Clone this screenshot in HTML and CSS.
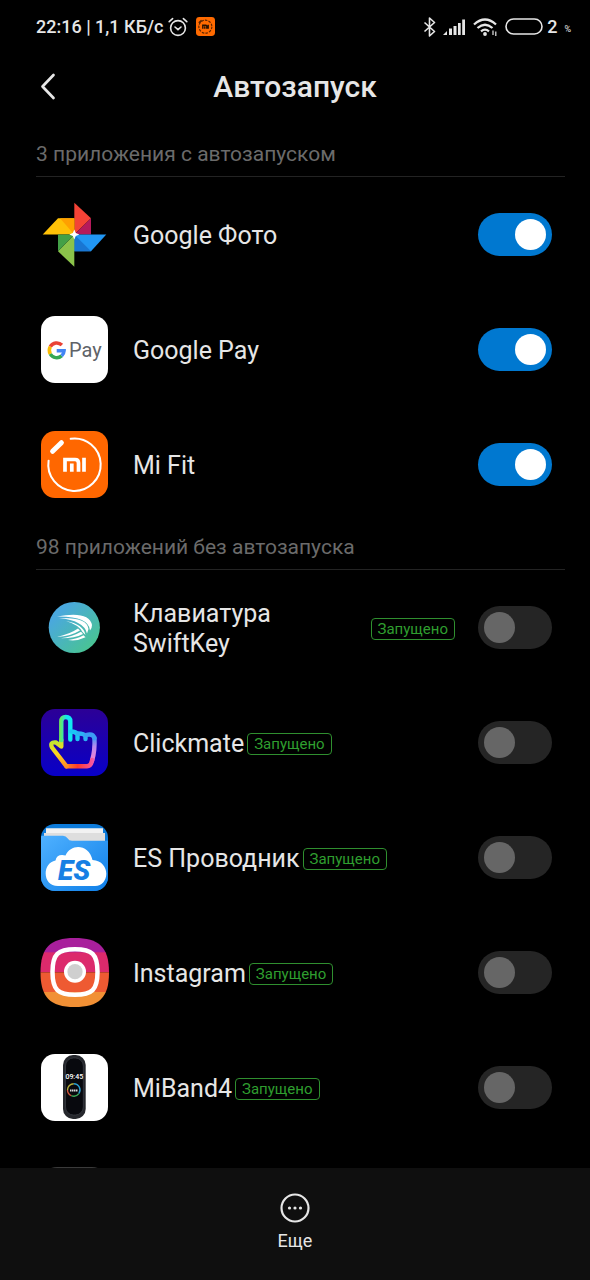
FILE: index.html
```html
<!DOCTYPE html>
<html lang="ru">
<head>
    <meta charset="UTF-8">
    <meta name="viewport" content="width=device-width, initial-scale=1.0">
    <title>Автозапуск</title>
    <link rel="stylesheet" href="styles.css">
</head>
<body>
    <div class="status-bar">
        <span class="status-text">22:16 | 1,1 КБ/с</span>
        <svg class="alarm" width="20" height="20" viewBox="0 0 20 20" fill="none" stroke="#e6e6e6" stroke-width="1.6" stroke-linecap="round">
            <circle cx="10" cy="11" r="7.4"/>
            <path d="M7 10l3 2.6 3-2.6M1.2 4.6L4.6 1.6M18.8 4.6L15.4 1.6"/>
        </svg>
        <svg class="mi-small" width="19" height="19" viewBox="0 0 67 67">
            <rect width="67" height="67" rx="12" fill="#ff6a00"/>
            <circle cx="33" cy="34" r="23" fill="none" stroke="#5a2500" stroke-width="4" stroke-dasharray="9 4"/>
            <path d="M10 21L20 12" stroke="#5a2500" stroke-width="6"/>
            <path d="M24 41V29h11q3 0 3 3v9M31 33v8M43 27v14" fill="none" stroke="#2b1200" stroke-width="5"/>
        </svg>
        <div class="status-right">
            <svg width="13" height="20" viewBox="0 0 13 20" fill="none" stroke="#e6e6e6" stroke-width="1.6" stroke-linejoin="round">
                <path d="M1.5 5.5l10 9-5 4.5V1l5 4.5-10 9"/>
            </svg>
            <svg class="signal" width="24" height="18" viewBox="0 0 24 18" fill="#e6e6e6">
                <path d="M1 17l4-4v4zM7 10.5h3V17H7zM11.5 8h3v9h-3zM16 5h2.7v12H16zM20.2 1.5H23V17h-2.8z"/>
            </svg>
            <svg class="wifi" width="25" height="20" viewBox="0 0 25 20" fill="none" stroke="#e6e6e6" stroke-width="2.3">
                <path d="M1 7.5q11-10 22 0M4.5 11q7.5-6.5 15 0M8 14.3q4-3.3 8 0"/>
                <circle cx="12" cy="17" r="1.9" fill="#e6e6e6" stroke="none"/>
                <path d="M20 13.5V18M22.8 14.5V19" stroke-width="1.2"/>
            </svg>
            <svg class="battery" width="38" height="18" viewBox="0 0 38 18">
                <rect x="1" y="1" width="36" height="15" rx="7.5" fill="none" stroke="#e6e6e6" stroke-width="1.6"/>
            </svg>
            <span class="status-text">2</span>
            <span class="percent">%</span>
        </div>
    </div>

    <header class="header">
        <button class="back" type="button" aria-label="Назад">
            <svg width="18" height="28" viewBox="0 0 18 28" fill="none" stroke="#e6e6e6" stroke-width="2.7" stroke-linecap="round" stroke-linejoin="round">
                <path d="M14.5 2L3.5 13.5 14.5 25"/>
            </svg>
        </button>
        <h1>Автозапуск</h1>
    </header>

    <main class="content">
        <h2 class="section-title">3 приложения с автозапуском</h2>
        <ul class="apps">
            <li class="app">
                <svg class="icon" viewBox="0 0 67 67">
                    <path d="M33.3 1.7L50 17.3 33.3 33.5z" fill="#f44336"/>
                    <path d="M50 17.3v16.2H33.3z" fill="#b51a5c"/>
                    <path d="M1.7 33.5L17 17.3h16.3v16.2z" fill="#ffc107"/>
                    <path d="M19 17.3h14.3v16.2z" fill="#ffa000"/>
                    <path d="M33.3 33.5h32L50 50.3H33.3z" fill="#2196f3"/>
                    <path d="M33.3 33.5L50 50.3H33.3z" fill="#1976d2"/>
                    <path d="M33.3 33.5v32.2L17 50.3z" fill="#8bc34a"/>
                    <path d="M17 33.5h16.3L17 50.3z" fill="#43a047"/>
                    <path d="M33.3 28.5l1.5 3.5 3.5 1.5-3.5 1.5-1.5 3.5-1.5-3.5-3.5-1.5 3.5-1.5z" fill="#fff"/>
                </svg>
                <div class="info"><label class="name" for="photos">Google Фото</label></div>
                <input class="toggle" type="checkbox" id="photos" checked>
            </li>
            <li class="app">
                <svg class="icon" viewBox="0 0 67 67">
                    <rect width="67" height="67" rx="14" fill="#fff"/>
                    <g fill="none" stroke-width="3.5">
                        <path d="M9.3 30.7A7.4 7.4 0 0 1 20.9 29.1" stroke="#ea4335"/>
                        <path d="M9.3 38A7.4 7.4 0 0 1 9.3 30.7" stroke="#fbbc04"/>
                        <path d="M9.3 38A7.4 7.4 0 0 0 20.6 39.9" stroke="#34a853"/>
                        <path d="M15.7 34.7h7.4A7.4 7.4 0 0 1 20.6 39.9" stroke="#4285f4"/>
                    </g>
                    <text class="pay-text" x="28" y="41">Pay</text>
                </svg>
                <div class="info"><label class="name" for="pay">Google Pay</label></div>
                <input class="toggle" type="checkbox" id="pay" checked>
            </li>
            <li class="app">
                <svg class="icon" viewBox="0 0 67 67">
                    <rect width="67" height="67" rx="14" fill="#ff6700"/>
                    <path d="M29.7 7.8A26.2 26.2 0 1 1 7.6 29.7" fill="none" stroke="#fff" stroke-width="2" stroke-linecap="round"/>
                    <path d="M11.6 20.3l8.8-8.6" stroke="#fff" stroke-width="5" stroke-linecap="round"/>
                    <path d="M24 40.7V28.5h10q3.5 0 3.5 3.5v8.7M30.8 32.5v8.2M43 26.8v13.9" fill="none" stroke="#fff" stroke-width="3.7"/>
                </svg>
                <div class="info"><label class="name" for="mifit">Mi Fit</label></div>
                <input class="toggle" type="checkbox" id="mifit" checked>
            </li>
        </ul>

        <h2 class="section-title">98 приложений без автозапуска</h2>
        <ul class="apps">
            <li class="app">
                <svg class="icon" viewBox="0 0 67 67">
                    <defs>
                        <linearGradient id="swift" x1="0" y1="0" x2="1" y2="1">
                            <stop offset="0.2" stop-color="#4aa8de"/>
                            <stop offset="0.9" stop-color="#49c58f"/>
                        </linearGradient>
                    </defs>
                    <circle cx="33.3" cy="33.5" r="25.6" fill="url(#swift)"/>
                    <g fill="#fff">
                        <path d="M16 22.5Q48 16.5 51 31Q51 34.500 49 36.500Q48 22 16 22.500z"/>
                        <path d="M18 24Q46.500 23 47.500 35L46 39.500Q43 26.500 18 24z"/>
                        <path d="M25 27Q42.500 30 44.500 41L41.500 38Q38 31 25 27z"/>
                        <path d="M16 43Q29 40 37 34.500L39 36.500Q30 42 16 43z"/>
                        <path d="M20 44.300Q32 42.500 40 37.800L42 40Q33 44.500 20 44.300z"/>
                        <path d="M27 46Q36 45 42.500 41.300L44.500 43.300Q36 47.500 27 46z"/>
                    </g>
                </svg>
                <div class="info">
                    <label class="name" for="swiftkey">Клавиатура SwiftKey</label>
                    <span class="badge">Запущено</span>
                </div>
                <input class="toggle" type="checkbox" id="swiftkey">
            </li>
            <li class="app">
                <svg class="icon" viewBox="0 0 67 67">
                    <defs>
                        <linearGradient id="night" x1="0" y1="0" x2="0" y2="1">
                            <stop offset="0" stop-color="#2c0096"/>
                            <stop offset="1" stop-color="#0800c8"/>
                        </linearGradient>
                        <linearGradient id="finger" gradientUnits="userSpaceOnUse" x1="19" y1="0" x2="30" y2="0">
                            <stop offset="0" stop-color="#6be85c"/>
                            <stop offset="0.6" stop-color="#12e8f2"/>
                        </linearGradient>
                        <linearGradient id="thumb" gradientUnits="userSpaceOnUse" x1="20" y1="30" x2="24" y2="58">
                            <stop offset="0" stop-color="#b9e833"/>
                            <stop offset="0.5" stop-color="#ffd51f"/>
                            <stop offset="1" stop-color="#ff8a24"/>
                        </linearGradient>
                        <linearGradient id="palm" gradientUnits="userSpaceOnUse" x1="25" y1="0" x2="54" y2="0">
                            <stop offset="0" stop-color="#ff8a24"/>
                            <stop offset="0.4" stop-color="#ff3a2c"/>
                            <stop offset="1" stop-color="#f45bb4"/>
                        </linearGradient>
                        <linearGradient id="side" gradientUnits="userSpaceOnUse" x1="0" y1="28" x2="0" y2="52">
                            <stop offset="0" stop-color="#3c9bf5"/>
                            <stop offset="0.4" stop-color="#b98af0"/>
                            <stop offset="1" stop-color="#f77fce"/>
                        </linearGradient>
                    </defs>
                    <rect width="67" height="67" rx="14" fill="url(#night)"/>
                    <g fill="none" stroke-width="4.4" stroke-linecap="round" stroke-linejoin="round">
                        <path d="M53.5 29Q54 42 51.2 51" stroke="url(#side)"/>
                        <path d="M25.5 57.3H46Q50 57.3 51.2 51" stroke="url(#palm)"/>
                        <path d="M20.3 31v6.5L15 33.5Q8.500 32.500 11 38.500L25.500 57.300" stroke="url(#thumb)"/>
                        <path d="M20.3 31V12.500q0-4.500 4.500-4.500T29.300 12.500v18" stroke="url(#finger)"/>
                        <path d="M30 22.500q5 0 6.500 3v4.500" stroke="#1cc5f5"/>
                        <path d="M37 24.500q6 0 7.500 2.500v3" stroke="#2bb0f5"/>
                        <path d="M45 26q7-2 8.500 3" stroke="#3c9bf5"/>
                    </g>
                </svg>
                <div class="info">
                    <label class="name" for="clickmate">Clickmate</label>
                    <span class="badge">Запущено</span>
                </div>
                <input class="toggle" type="checkbox" id="clickmate">
            </li>
            <li class="app">
                <svg class="icon" viewBox="0 0 67 67">
                    <defs>
                        <clipPath id="es-shape"><rect width="67" height="67" rx="14"/></clipPath>
                        <linearGradient id="folder" x1="0" y1="0" x2="1" y2="1">
                            <stop offset="0" stop-color="#4fb1ff"/>
                            <stop offset="1" stop-color="#0f7fe8"/>
                        </linearGradient>
                    </defs>
                    <g clip-path="url(#es-shape)">
                        <rect width="67" height="67" fill="#0d7bda"/>
                        <path d="M5 4.3h57V14H5z" fill="#f2f2f2"/>
                        <path d="M3 9h61v10H3z" fill="#dedede"/>
                        <path d="M0 11.7h22q3 0 4.5 2.5t4.5 2.5h36V67H0z" fill="url(#folder)"/>
                        <path d="M17 62C1 62 1 39 14.5 36.5Q16 29.5 24.5 31.5C30 19 48 20 51.5 36C70 37 69 62 54 62z" fill="#fff"/>
                        <text class="es-text" x="17" y="56">ES</text>
                    </g>
                </svg>
                <div class="info">
                    <label class="name" for="es">ES Проводник</label>
                    <span class="badge">Запущено</span>
                </div>
                <input class="toggle" type="checkbox" id="es">
            </li>
            <li class="app">
                <svg class="icon" viewBox="0 0 67 67">
                    <defs>
                        <clipPath id="insta-shape">
                            <path d="M33.5-1C58-1 68 8 68 33.5S58 68 33.5 68-.5 58-.5 33.5 9-1 33.5-1z"/>
                        </clipPath>
                    </defs>
                    <g clip-path="url(#insta-shape)">
                        <rect x="-1" y="-1" width="70" height="15" fill="#a81f9c"/>
                        <rect x="-1" y="13.3" width="70" height="20" fill="#dc2a6c"/>
                        <rect x="-1" y="33.3" width="70" height="20" fill="#ee5a32"/>
                        <rect x="-1" y="53" width="70" height="16" fill="#f19035"/>
                    </g>
                    <path d="M34 10.2C51 10.2 56.5 15 56.5 33S51 55.8 34 55.8 11.5 51 11.5 33 17 10.2 34 10.2z" fill="none" stroke="#fff" stroke-width="4.5"/>
                    <circle cx="34" cy="32.7" r="11" fill="#fff"/>
                    <circle cx="34" cy="32.7" r="7.6" fill="#cfcfcf"/>
                </svg>
                <div class="info">
                    <label class="name" for="instagram">Instagram</label>
                    <span class="badge">Запущено</span>
                </div>
                <input class="toggle" type="checkbox" id="instagram">
            </li>
            <li class="app">
                <svg class="icon" viewBox="0 0 67 67">
                    <rect width="67" height="67" rx="14" fill="#fff"/>
                    <rect x="22" y="1" width="22.7" height="64" rx="10" fill="#25272c"/>
                    <rect x="24.5" y="4" width="17.8" height="57" rx="8" fill="#08090e" stroke="#3c3f46" stroke-width="0.7"/>
                    <text class="clock-text" x="33.3" y="25">09:45</text>
                    <path d="M26.5 36a6.3 6.3 0 0 1 6.3-6.3" fill="none" stroke="#b9b13a" stroke-width="1.4"/>
                    <path d="M32.8 29.7a6.3 6.3 0 0 1 5 10" fill="none" stroke="#2a9fd0" stroke-width="1.4"/>
                    <path d="M37.8 39.7a6.3 6.3 0 0 1-7.5 2" fill="none" stroke="#3fae58" stroke-width="1.4"/>
                    <path d="M30.3 41.7a6.3 6.3 0 0 1-3.8-5.7" fill="none" stroke="#d0553a" stroke-width="1.4"/>
                    <path d="M29 36.5h8" stroke="#ddd" stroke-width="2" stroke-dasharray="1.5 .5"/>
                </svg>
                <div class="info">
                    <label class="name" for="miband">MiBand4</label>
                    <span class="badge">Запущено</span>
                </div>
                <input class="toggle" type="checkbox" id="miband">
            </li>
            <li class="app">
                <svg class="icon" viewBox="0 0 67 67">
                    <rect y="-2" width="67" height="68" rx="16" fill="#3a3a3a"/>
                </svg>
            </li>
        </ul>
    </main>

    <footer class="footer">
        <button class="more" type="button">
            <svg width="30" height="30" viewBox="0 0 30 30">
                <circle cx="15" cy="15" r="13.5" fill="none" stroke="#e6e6e6" stroke-width="2.2"/>
                <g fill="#e6e6e6">
                    <circle cx="9.5" cy="15" r="1.6"/>
                    <circle cx="15" cy="15" r="1.6"/>
                    <circle cx="20.5" cy="15" r="1.6"/>
                </g>
            </svg>
            Еще
        </button>
    </footer>
</body>
</html>
```

FILE: styles.css
```css
* {
    box-sizing: border-box;
}
body {
    display: flex;
    flex-direction: column;
    height: 100vh;
    margin: 0;
    background: #000;
    color: #e6e6e6;
    font-family: Roboto, "Liberation Sans", sans-serif;
    overflow: hidden;
}
h1, h2, ul {
    margin: 0;
    padding: 0;
}
svg {
    flex-shrink: 0;
}
button {
    border: none;
    padding: 0;
    background: none;
    color: inherit;
    font-family: inherit;
    cursor: pointer;
}

/* status bar */
.status-bar {
    display: flex;
    flex-shrink: 0;
    align-items: center;
    height: 53px;
    padding: 0 19px 0 36px;
}
.status-text {
    font-size: 18px;
    font-weight: 500;
}
.alarm {
    margin-left: 5px;
}
.mi-small {
    margin-left: 8px;
}
.status-right {
    display: flex;
    align-items: center;
    margin-left: auto;
}
.signal {
    margin-left: 6px;
}
.wifi {
    margin-left: 7px;
}
.battery {
    margin: 0 4px 0 7px;
}
.percent {
    margin-left: 7px;
    padding-top: 4px;
    font-size: 9px;
    line-height: 12px;
}

/* header */
.header {
    display: grid;
    grid-template-columns: 60px 1fr 60px;
    align-items: center;
    flex-shrink: 0;
    height: 76px;
    padding-bottom: 9px;
}
.back {
    display: flex;
    justify-content: flex-end;
    padding-right: 3px;
}
h1 {
    font-size: 30px;
    font-weight: 500;
    text-align: center;
}

/* list */
.content {
    flex: 1;
    min-height: 0;
    overflow: hidden;
}
.section-title {
    margin: 0 25px 0 36px;
    padding: 13px 0 10px;
    border-bottom: 1px solid #232323;
    color: #6b6b6b;
    font-size: 21px;
    font-weight: 400;
    line-height: 24px;
}
.apps {
    list-style: none;
}
.app {
    display: flex;
    align-items: center;
    height: 115px;
    padding: 0 38px 0 41px;
}
.icon {
    width: 67px;
    height: 67px;
    overflow: visible;
}
.info {
    display: flex;
    flex: 1;
    align-items: center;
    gap: 3px;
    min-width: 0;
    margin: 3px 23px 0 25px;
}
.name {
    font-size: 25px;
    line-height: 30px;
}
.badge {
    flex-shrink: 0;
    padding: 0 6px;
    border: 1px solid #2f8f2f;
    border-radius: 4px;
    color: #2f9e2f;
    font-size: 15px;
    line-height: 20px;
}
.toggle {
    appearance: none;
    flex-shrink: 0;
    width: 74px;
    height: 43px;
    margin: 0;
    padding: 6px;
    border-radius: 22px;
    background: #252525;
    cursor: pointer;
}
.toggle::before {
    content: "";
    display: block;
    width: 31px;
    height: 31px;
    border-radius: 50%;
    background: #666;
}
.toggle:checked {
    background: #0078d0;
}
.toggle:checked::before {
    margin-left: auto;
    background: #fff;
}

/* text inside the app icons */
.pay-text {
    fill: #5f6368;
    font-size: 20px;
}
.es-text {
    fill: #1680e4;
    font-size: 28px;
    font-weight: 900;
    font-style: italic;
}
.clock-text {
    fill: #fff;
    font-size: 7px;
    font-weight: 500;
    text-anchor: middle;
}

/* bottom bar */
.footer {
    display: flex;
    flex-shrink: 0;
    justify-content: center;
    height: 112px;
    background: #0f0f0f;
}
.more {
    display: flex;
    flex-direction: column;
    align-items: center;
    gap: 8px;
    padding: 25px 20px 0;
    font-size: 18px;
    line-height: 20px;
}
```
